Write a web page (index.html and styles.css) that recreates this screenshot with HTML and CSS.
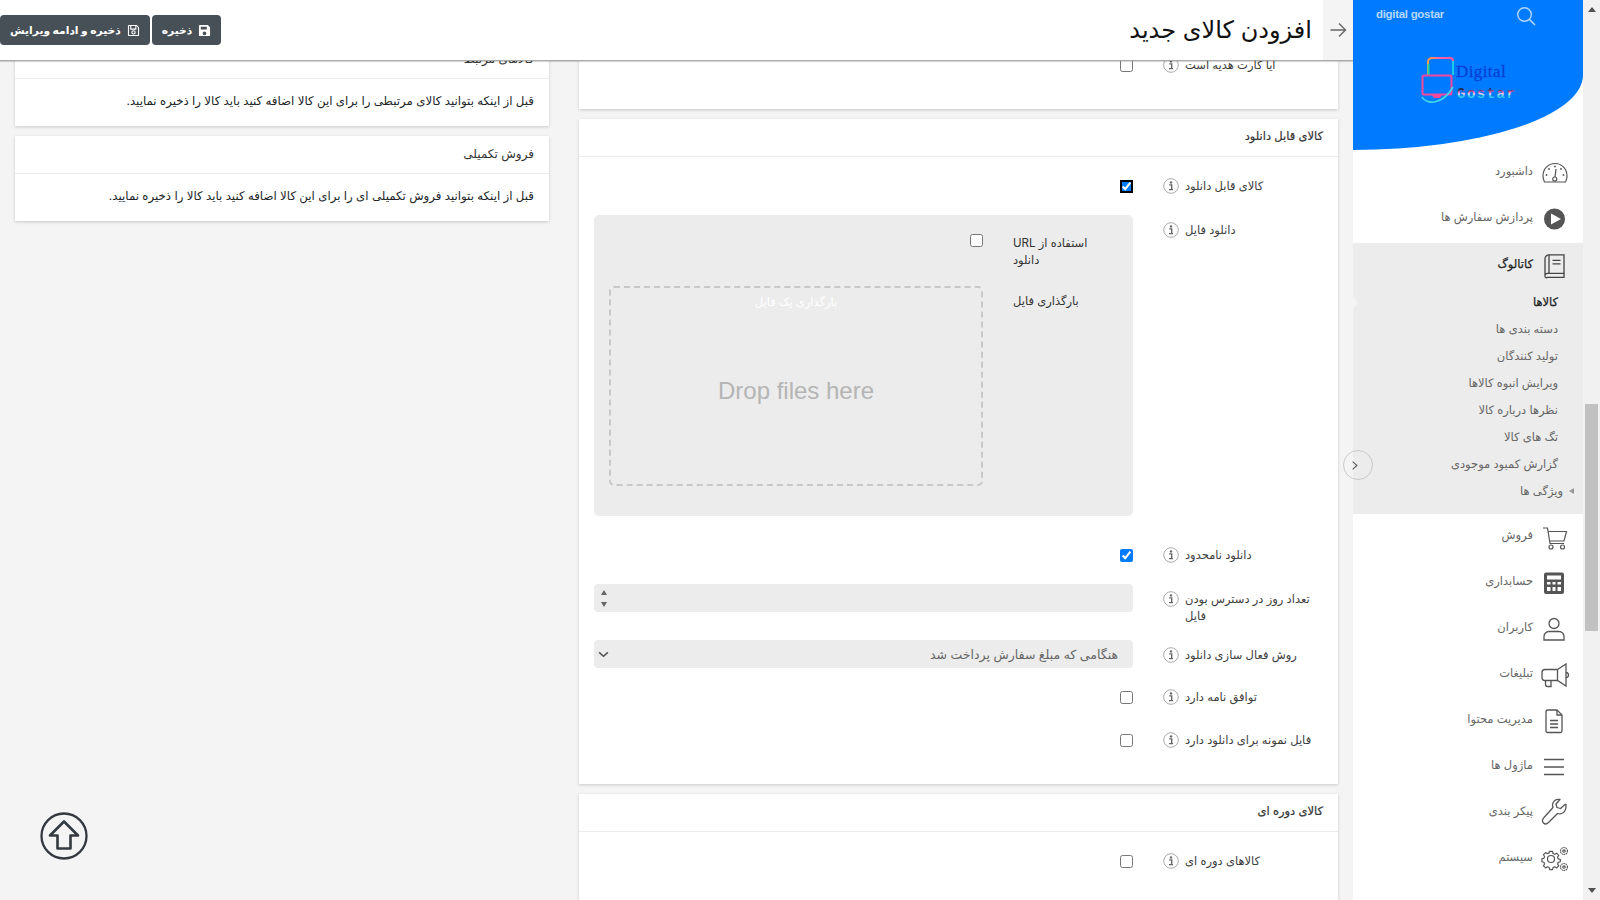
FILE: index.html
```html
<!DOCTYPE html>
<html lang="fa" dir="rtl">
<head>
<meta charset="utf-8">
<title>افزودن کالای جدید</title>
<link rel="stylesheet" href="styles.css">
</head>
<body>
<svg class="defs" aria-hidden="true">
  <symbol id="info" viewBox="0 0 16 16">
    <circle cx="8" cy="8" r="7.3" fill="none" stroke="#aaa" stroke-width="1"/>
    <circle cx="8" cy="4.4" r="1.2" fill="#666"/>
    <path d="M6.2 6.9H8.7V11.6H10M6 11.6H8.7" fill="none" stroke="#666" stroke-width="1.4"/>
  </symbol>
</svg>
<div class="app">
  <div class="scrollbar">
    <span class="sb-up"></span>
    <span class="sb-thumb"></span>
    <span class="sb-down"></span>
  </div>

  <aside class="sidebar">
    <div class="brand">
      <div class="brand-top">
        <svg class="search" viewBox="0 0 20 20" width="20" height="20"><circle cx="8.5" cy="8.5" r="6.8" fill="none" stroke="#b3d7ff" stroke-width="1.4"/><path d="M13.5 13.5L19 19" stroke="#b3d7ff" stroke-width="1.6"/></svg>
        <span class="brand-name">digital gostar</span>
      </div>
      <svg class="logo" viewBox="0 0 100 50" width="100" height="50">
        <defs>
          <linearGradient id="lg1" x1="0" y1="0" x2="1" y2="0"><stop offset="0" stop-color="#ff9a3c"/><stop offset=".5" stop-color="#ff5fa8"/><stop offset="1" stop-color="#ff4fa0"/></linearGradient>
          <linearGradient id="lg2" x1="0" y1="0" x2="0" y2="1"><stop offset=".2" stop-color="#16264f"/><stop offset=".38" stop-color="#f05fa8"/><stop offset=".5" stop-color="#f0d8f0"/><stop offset=".62" stop-color="#2fc8e8"/></linearGradient>
        </defs>
        <path d="M7 19V6a4 4 0 0 1 4-4H29a3 3 0 0 1 3 3" fill="none" stroke="url(#lg1)" stroke-width="2"/>
        <path d="M7.500 8V19" stroke="#1fd6a0" stroke-width="2"/>
        <path d="M32 5V19" stroke="#20c8e8" stroke-width="2"/>
        <rect x="1.500" y="19.500" width="29" height="19" rx="1.500" fill="none" stroke="#f6479c" stroke-width="2"/>
        <path d="M11 39h10l-2 3h-6z" fill="#f6479c"/>
        <path d="M1 41c4 8 21 8 31-10" fill="none" stroke="#3fd8ee" stroke-width="1.600"/>
        <text class="logo-d" x="35" y="21">Digital</text>
        <text class="logo-g" x="36" y="42" fill="url(#lg2)">Gostar</text>
      </svg>
    </div>
    <nav class="menu">
      <a class="item"><span class="ico"><svg viewBox="0 0 30 30" width="30" height="30"><g fill="none" stroke="#555" stroke-width="1.2"><path d="M5.500 24c-1-2-1.500-4-1.500-6C4 11 9 5.500 16 5.500S28 11 28 18c0 2-.5 4-1.500 6z"/><path d="M17 11l-1 8"/><circle cx="15.800" cy="21" r="2"/></g><g fill="#555"><circle cx="7.500" cy="17" r=".9"/><circle cx="10" cy="11" r=".9"/><circle cx="16" cy="8.500" r=".9"/><circle cx="22" cy="11" r=".9"/><circle cx="24.500" cy="17" r=".9"/></g></svg></span><span>داشبورد</span></a>
      <a class="item"><span class="ico"><svg viewBox="0 0 30 30" width="30" height="30"><circle cx="15.500" cy="15" r="10.500" fill="#555"/><path d="M12 9.500l10 5.500-10 5.500z" fill="#fff"/></svg></span><span>پردازش سفارش ها</span></a>
      <div class="group">
        <a class="item item-open"><span class="ico"><svg viewBox="0 0 30 30" width="30" height="30"><g fill="none" stroke="#444" stroke-width="1.300" transform="translate(.5 -.7)"><path d="M9.500 4.500H24.500V23H8a2.500 2.500 0 0 0-2.500 2.500V8.500a4 4 0 0 1 4-4z"/><path d="M5.500 25.500A1.500 1.500 0 0 0 8 27H24.500V23"/><path d="M9.500 4.500V23M13 10H21M13 13.500H21" /></g></svg></span><span>کاتالوگ</span></a>
        <a class="sub sub-active">کالاها</a>
        <a class="sub">دسته بندی ها</a>
        <a class="sub">تولید کنندگان</a>
        <a class="sub">ویرایش انبوه کالاها</a>
        <a class="sub">نظرها درباره کالا</a>
        <a class="sub">تگ های کالا</a>
        <a class="sub">گزارش کمبود موجودی</a>
        <a class="sub sub-more"><span class="more-arrow"></span><span>ویژگی ها</span></a>
      </div>
      <a class="item"><span class="ico"><svg viewBox="0 0 30 30" width="30" height="30"><g fill="none" stroke="#555" stroke-width="1.200"><path d="M4 6H8.500L11 21.500H25M9 9.500H27.500L25 19H10.500"/><circle cx="12" cy="25" r="2"/><circle cx="23.500" cy="25" r="2"/></g></svg></span><span>فروش</span></a>
      <a class="item"><span class="ico"><svg viewBox="0 0 30 30" width="30" height="30"><path fill="#555" fill-rule="evenodd" d="M7 4.500H23a2 2 0 0 1 2 2V24a2 2 0 0 1-2 2H7a2 2 0 0 1-2-2V6.500a2 2 0 0 1 2-2zM8 7.500V11.500H22V7.500zM8 14V16.500H11.500V14zM13.500 14V16.500H16.500V14zM18.500 14V16.500H22V14zM8 19V23H11.500V19zM13.500 19V23H16.500V19zM18.500 19V23H22V19z"/></svg></span><span>حسابداری</span></a>
      <a class="item"><span class="ico"><svg viewBox="0 0 30 30" width="30" height="30"><g fill="none" stroke="#555" stroke-width="1.300"><circle cx="15" cy="9.500" r="5"/><path d="M10 17.500H20a5 5 0 0 1 5 5V26H5V22.500a5 5 0 0 1 5-5z"/></g></svg></span><span>کاربران</span></a>
      <a class="item"><span class="ico"><svg viewBox="0 0 30 30" width="30" height="30"><g fill="none" stroke="#555" stroke-width="1.300"><path d="M18.500 9.500L27 4V26L18.500 20.500H6a3 3 0 0 1-3-3V12.500a3 3 0 0 1 3-3z"/><path d="M18.500 9.500V20.500M6.500 20.500V24.500a2 2 0 0 0 2 2H12V21"/><path d="M27 12.500a2.500 2.500 0 0 1 0 5"/></g></svg></span><span>تبلیغات</span></a>
      <a class="item"><span class="ico"><svg viewBox="0 0 30 30" width="30" height="30"><g fill="none" stroke="#555" stroke-width="1.300"><path d="M9 4H18L23 9V25a1.500 1.500 0 0 1-1.500 1.500H8.500A1.500 1.500 0 0 1 7 25V6a2 2 0 0 1 2-2z"/><path d="M18 4V9H23M11 14.500H19M11 18H19M11 21.500H19"/></g></svg></span><span>مدیریت محتوا</span></a>
      <a class="item"><span class="ico"><svg viewBox="0 0 30 30" width="30" height="30"><path d="M5 7.500H25M5 15H25M5 22.500H25" stroke="#555" stroke-width="1.300"/></svg></span><span>ماژول ها</span></a>
      <a class="item"><span class="ico"><svg viewBox="0 0 30 30" width="30" height="30"><path fill="none" stroke="#555" stroke-width="1.300" stroke-linejoin="round" d="M26 6.500l-4.500 4-3.500-1-1-3.500 4-4.500c-4-1-7.500 2-7.500 5.500 0 1 .2 1.800.5 2.500L5 19.500c-2.500 2.500-1.500 4.500-.5 5.500s3 1.500 5-.5l9-9c4.500 1.500 9-1.500 8.500-9z"/></svg></span><span>پیکر بندی</span></a>
      <a class="item"><span class="ico"><svg viewBox="0 0 30 30" width="30" height="30"><g fill="none" stroke="#555" stroke-width="1.200"><circle cx="12" cy="15" r="3.500"/><path stroke-width="1.500" stroke-linejoin="round" d="M10 5.500h4l.6 2.600 2.200 1 2.400-1.400 2.600 2.700-1.500 2.300.9 2.300 2.600.6v3l-2.600.7-.9 2.100 1.500 2.400-2.800 2.600-2.300-1.500-2.100.9-.6 2.600h-3.700l-.6-2.600-2.200-.9-2.300 1.500-2.700-2.700 1.400-2.300-.9-2.200-2.500-.6V14.800l2.500-.6.900-2.300-1.400-2.300 2.700-2.700 2.300 1.400 2.200-1z" transform="translate(2.500 3.100) scale(.79)"/><circle cx="25" cy="7" r="3.500" stroke-dasharray="1.500 .7"/><circle cx="25" cy="7" r="1.200"/><circle cx="25" cy="23" r="3.500" stroke-dasharray="1.500 .7"/><circle cx="25" cy="23" r="1.200"/></g></svg></span><span>سیستم</span></a>
    </nav>
  </aside>

  <div class="main">
    <header class="topbar">
      <div class="back"><svg viewBox="0 0 18 18" width="18" height="18"><path d="M1.500 9H16.500M10 2.500L16.500 9 10 15.500" fill="none" stroke="#666" stroke-width="1.400"/></svg></div>
      <h1 class="title">افزودن کالای جدید</h1>
      <div class="actions">
        <button class="btn"><svg viewBox="0 0 14 14" width="13" height="13"><path fill="#fff" fill-rule="evenodd" d="M2 1H10.500L13 3.500V12a1 1 0 0 1-1 1H2a1 1 0 0 1-1-1V2a1 1 0 0 1 1-1zM3 3V6H9.500V3zM7 8a2 2 0 1 0 0 4 2 2 0 0 0 0-4z"/></svg><span>ذخیره</span></button>
        <button class="btn"><svg viewBox="0 0 14 14" width="13" height="13"><g fill="none" stroke="#fff" stroke-width="1.200"><path d="M2 1.600H10.300L12.400 3.700V12a.4.4 0 0 1-.4.4H2a.4.4 0 0 1-.4-.4V2a.4.4 0 0 1 .4-.4z"/><path d="M4 2V5.500H9.500V2"/><circle cx="7" cy="9" r="1.800"/></g></svg><span>ذخیره و ادامه ویرایش</span></button>
      </div>
    </header>

    <div class="viewport">
      <div class="columns">
        <div class="col">
          <section class="card">
            <div class="card-body card-body-cut">
              <div class="row">
                <label class="lbl">آیا کارت هدیه است</label>
                <div class="hint"><svg width="16" height="16"><use href="#info"/></svg></div>
                <div class="ctl"><input type="checkbox" class="chk"></div>
              </div>
            </div>
          </section>

          <section class="card">
            <div class="card-head card-head-sm">کالای قابل دانلود</div>
            <div class="card-body">
              <div class="row">
                <label class="lbl">کالای قابل دانلود</label>
                <div class="hint"><svg width="16" height="16"><use href="#info"/></svg></div>
                <div class="ctl"><input type="checkbox" class="chk chk-focus" checked></div>
              </div>
              <div class="row row-panel">
                <label class="lbl">دانلود فایل</label>
                <div class="hint"><svg width="16" height="16"><use href="#info"/></svg></div>
                <div class="ctl">
                  <div class="panel">
                    <div class="panel-row">
                      <label class="panel-lbl">استفاده از URL دانلود</label>
                      <div class="panel-ctl"><input type="checkbox" class="chk-panel"></div>
                    </div>
                    <div class="panel-row">
                      <label class="panel-lbl panel-lbl-pad">بارگذاری فایل</label>
                      <div class="dropzone">
                        <div class="dz-title">بارگذاری یک فایل</div>
                        <div class="dz-msg" dir="ltr">Drop files here</div>
                      </div>
                    </div>
                  </div>
                </div>
              </div>
              <div class="row">
                <label class="lbl">دانلود نامحدود</label>
                <div class="hint"><svg width="16" height="16"><use href="#info"/></svg></div>
                <div class="ctl"><input type="checkbox" class="chk" checked></div>
              </div>
              <div class="row row-two">
                <label class="lbl">تعداد روز در دسترس بودن فایل</label>
                <div class="hint"><svg width="16" height="16"><use href="#info"/></svg></div>
                <div class="ctl">
                  <div class="field"><span class="spin"><i class="spin-up"></i><i class="spin-down"></i></span></div>
                </div>
              </div>
              <div class="row row-field">
                <label class="lbl">روش فعال سازی دانلود</label>
                <div class="hint"><svg width="16" height="16"><use href="#info"/></svg></div>
                <div class="ctl">
                  <div class="field field-select"><span>هنگامی که مبلغ سفارش پرداخت شد</span><svg viewBox="0 0 12 8" width="11" height="7"><path d="M1 1.500L6 6 11 1.500" fill="none" stroke="#555" stroke-width="1.800"/></svg></div>
                </div>
              </div>
              <div class="row row-tight">
                <label class="lbl">توافق نامه دارد</label>
                <div class="hint"><svg width="16" height="16"><use href="#info"/></svg></div>
                <div class="ctl"><input type="checkbox" class="chk"></div>
              </div>
              <div class="row">
                <label class="lbl">فایل نمونه برای دانلود دارد</label>
                <div class="hint"><svg width="16" height="16"><use href="#info"/></svg></div>
                <div class="ctl"><input type="checkbox" class="chk"></div>
              </div>
            </div>
          </section>

          <section class="card">
            <div class="card-head card-head-sm">کالای دوره ای</div>
            <div class="card-body">
              <div class="row">
                <label class="lbl">کالاهای دوره ای</label>
                <div class="hint"><svg width="16" height="16"><use href="#info"/></svg></div>
                <div class="ctl"><input type="checkbox" class="chk"></div>
              </div>
            </div>
          </section>
        </div>

        <div class="col">
          <section class="card">
            <div class="card-head">کالاهای مرتبط</div>
            <div class="card-note">قبل از اینکه بتوانید کالای مرتبطی را برای این کالا اضافه کنید باید کالا را ذخیره نمایید.</div>
          </section>
          <section class="card">
            <div class="card-head">فروش تکمیلی</div>
            <div class="card-note">قبل از اینکه بتوانید فروش تکمیلی ای را برای این کالا اضافه کنید باید کالا را ذخیره نمایید.</div>
          </section>
        </div>
      </div>
    </div>

    <button class="totop" aria-label="بالا"><svg viewBox="0 0 48 48" width="48" height="48"><circle cx="24" cy="24" r="22.500" fill="none" stroke="#343a40" stroke-width="2.300"/><path d="M24 9.500L38 23.500H30.500V36.500H17.500V23.500H10z" fill="none" stroke="#343a40" stroke-width="2.600" stroke-linejoin="round"/></svg></button>
    <button class="collapse" aria-label="بستن منو"><svg viewBox="0 0 10 14" width="8" height="11"><path d="M2 2L7.500 7 2 12" fill="none" stroke="#555" stroke-width="1.300"/></svg></button>
    <span class="notch"></span>
  </div>
</div>
</body>
</html>
```
FILE: styles.css
```css
* { box-sizing: border-box; }
html, body { margin: 0; padding: 0; height: 900px; overflow: hidden; }
body {
  font-family: "Inter", "DejaVu Sans", sans-serif;
  font-size: 11.5px;
  color: #333;
  background: #f4f4f4;
}
.defs { position: absolute; width: 0; height: 0; }
.app { display: flex; height: 900px; }

/* fake page scrollbar */
.scrollbar {
  width: 17px;
  flex: none;
  background: #f1f1f1;
  display: flex;
  flex-direction: column;
  align-items: center;
  position: relative;
}
.sb-up { margin-top: 7px; border: 4px solid transparent; border-top: 0; border-bottom: 5px solid #505050; }
.sb-thumb { width: 13px; height: 227px; background: #c1c1c1; margin-top: 392px; }
.sb-down { margin-top: auto; margin-bottom: 7px; border: 4px solid transparent; border-bottom: 0; border-top: 5px solid #505050; }

/* sidebar */
.sidebar { width: 230px; flex: none; background: #fff; height: 900px; }
.brand {
  height: 150px;
  background: #007bff;
  border-bottom-right-radius: 230px 75px;
  display: flex;
  flex-direction: column;
}
.brand-top { display: flex; align-items: center; height: 30px; padding: 0 47px 0 0; }
.search { flex: none; margin-left: 72px; margin-top: 2px; }
.brand-name { font-family: "Liberation Sans", sans-serif; font-size: 11.5px; font-weight: 700; color: #b3d7ff; direction: ltr; margin-top: -3px; letter-spacing: -.3px; }
.logo { margin: 26px 62px 0 0; align-self: flex-start; flex: none; }
.logo-d { font-family: "Liberation Serif", serif; font-size: 17px; fill: #0a3fd6; stroke: #0a3fd6; stroke-width: .3px; direction: ltr; letter-spacing: .4px; }
.logo-g { font-family: "Liberation Mono", monospace; font-size: 14px; font-weight: 700; direction: ltr; letter-spacing: 1.5px; }

.menu { display: flex; flex-direction: column; font-size: 11.5px; color: #666; }
.item { display: flex; align-items: center; height: 46px; padding-right: 14px; gap: 6px; }
.item > span:last-child { margin-top: -4px; }
.ico { width: 30px; height: 30px; flex: none; display: block; }
.ico svg { display: block; }
.group { background: #ececec; padding-bottom: 10px; margin-top: 1px; }
.item-open { height: 45px; color: #222; -webkit-text-stroke: .25px #222; }
.sub { display: flex; align-items: center; height: 27px; padding-right: 25px; color: #666; }
.sub-active { color: #222; -webkit-text-stroke: .25px #222; }
.sub-more { padding-right: 9px; gap: 6px; }
.more-arrow { border: 3px solid transparent; border-left: 0; border-right: 5px solid #999; }

/* main */
.main { flex: 1; min-width: 0; position: relative; display: flex; flex-direction: column; height: 900px; }
.topbar {
  height: 61px;
  flex: none;
  background: #fff;
  display: flex;
  align-items: stretch;
  border-bottom: 1px solid #a9a9a9;
  box-shadow: 0 1px 1px rgba(0,0,0,.15);
  position: relative;
  z-index: 2;
}
.back { width: 30px; background: #f4f4f4; display: flex; align-items: center; justify-content: center; }
.title { margin: 0 11px 0 0; font-size: 24px; font-weight: 400; color: #111; line-height: 60px; }
.actions { margin-right: auto; display: flex; align-items: center; gap: 2px; padding-bottom: 1px; margin-top: 1px; }
.btn {
  font: inherit;
  font-weight: 700;
  font-size: 10.7px;
  height: 30px;
  padding: 0 10px;
  border: 0;
  border-radius: 4px;
  background: #474f57;
  color: #fff;
  display: flex;
  align-items: center;
  gap: 6px;
  white-space: nowrap;
}
.viewport { flex: 1; overflow: hidden; min-height: 0; }
.columns { display: grid; grid-template-columns: 759px 534px; gap: 30px; padding: 0 15px; margin-top: -20px; }
.col { display: flex; flex-direction: column; gap: 10px; }
.card { background: #fff; box-shadow: 0 1px 3px rgba(0,0,0,.18); }
.card-head { height: 38px; border-bottom: 1px solid #ececec; padding: 0 15px 3px; display: flex; align-items: center; font-size: 12px; color: #333; }
.card-head-sm { font-size: 11.5px; -webkit-text-stroke: .2px #333; }
.card-body { padding: 7px 15px 22px; }
.card-body-cut { padding: 2px 15px 22px; }
.card-note { height: 47px; padding: 0 15px 3px; display: flex; align-items: center; font-size: 11.8px; color: #212529; }

.row { display: flex; align-items: flex-start; min-height: 44px; padding: 7px 0 0; }
.row-panel { padding-bottom: 17px; }
.row-two { padding-bottom: 8px; }
.row-field { min-height: 42px; }
.row-tight { min-height: 43px; }
.lbl { width: 138px; flex: none; padding: 7px 8px 0 0; line-height: 17px; text-align: left; color: #3c3c3c; }
.hint { width: 52px; flex: none; display: flex; justify-content: flex-start; padding: 7px 6px 0 0; }
.hint svg { display: block; }
.ctl { flex: 1; min-width: 0; }
.chk { display: block; width: 13px; height: 13px; margin: 9px 0 0; accent-color: #007bff; }
.chk-focus { outline: 2px solid #000; outline-offset: -2px; }

.panel { height: 301px; background: #ececec; border-radius: 5px; padding: 20px 0 0 15px; display: flex; flex-direction: column; gap: 17px; }
.panel-row { display: flex; align-items: flex-start; gap: 30px; }
.panel-lbl { width: 120px; flex: none; padding-right: 30px; line-height: 17px; text-align: left; color: #333; }
.panel-lbl-pad { padding-top: 7px; }
.panel-ctl { width: 374px; min-height: 34px; }
.chk-panel { display: block; width: 13px; height: 13px; margin: -1px 0 0; }
.dropzone {
  width: 374px;
  height: 200px;
  border: 2px dashed #c8c8c8;
  border-radius: 5px;
  display: flex;
  flex-direction: column;
  align-items: center;
}
.dz-title { color: #fff; font-size: 11.5px; margin-top: 7px; line-height: 14px; }
.dz-msg { font-family: "Liberation Sans", sans-serif; font-size: 24px; color: #b5b5b5; margin-top: 67px; line-height: 30px; }

.field { height: 28px; background: #ececec; border-radius: 4px; display: flex; align-items: center; justify-content: space-between; padding: 0 15px 0 7px; color: #666; font-size: 12.500px; }
.field-select { padding-left: 4px; }
.field-select svg { flex: none; }
.spin { margin-right: auto; display: flex; flex-direction: column; gap: 7px; }
.spin i { display: block; border: 3.500px solid transparent; }
.spin-up { border-top: 0 !important; border-bottom: 5px solid #666 !important; }
.spin-down { border-bottom: 0 !important; border-top: 5px solid #666 !important; }

.totop { position: absolute; left: 40px; top: 812px; width: 48px; height: 48px; padding: 0; border: 0; background: none; z-index: 1; }
.totop svg { display: block; }
.collapse { position: absolute; left: 1343px; top: 450px; width: 30px; height: 30px; border-radius: 50%; border: 1px solid #c9c9c9; background: transparent; padding: 0 6px 0 0; display: flex; align-items: center; justify-content: center; z-index: 3; }
.notch { position: absolute; left: 1353px; top: 297px; border: 6px solid transparent; border-right: 0; border-left: 5px solid #f4f4f4; z-index: 3; }
```
